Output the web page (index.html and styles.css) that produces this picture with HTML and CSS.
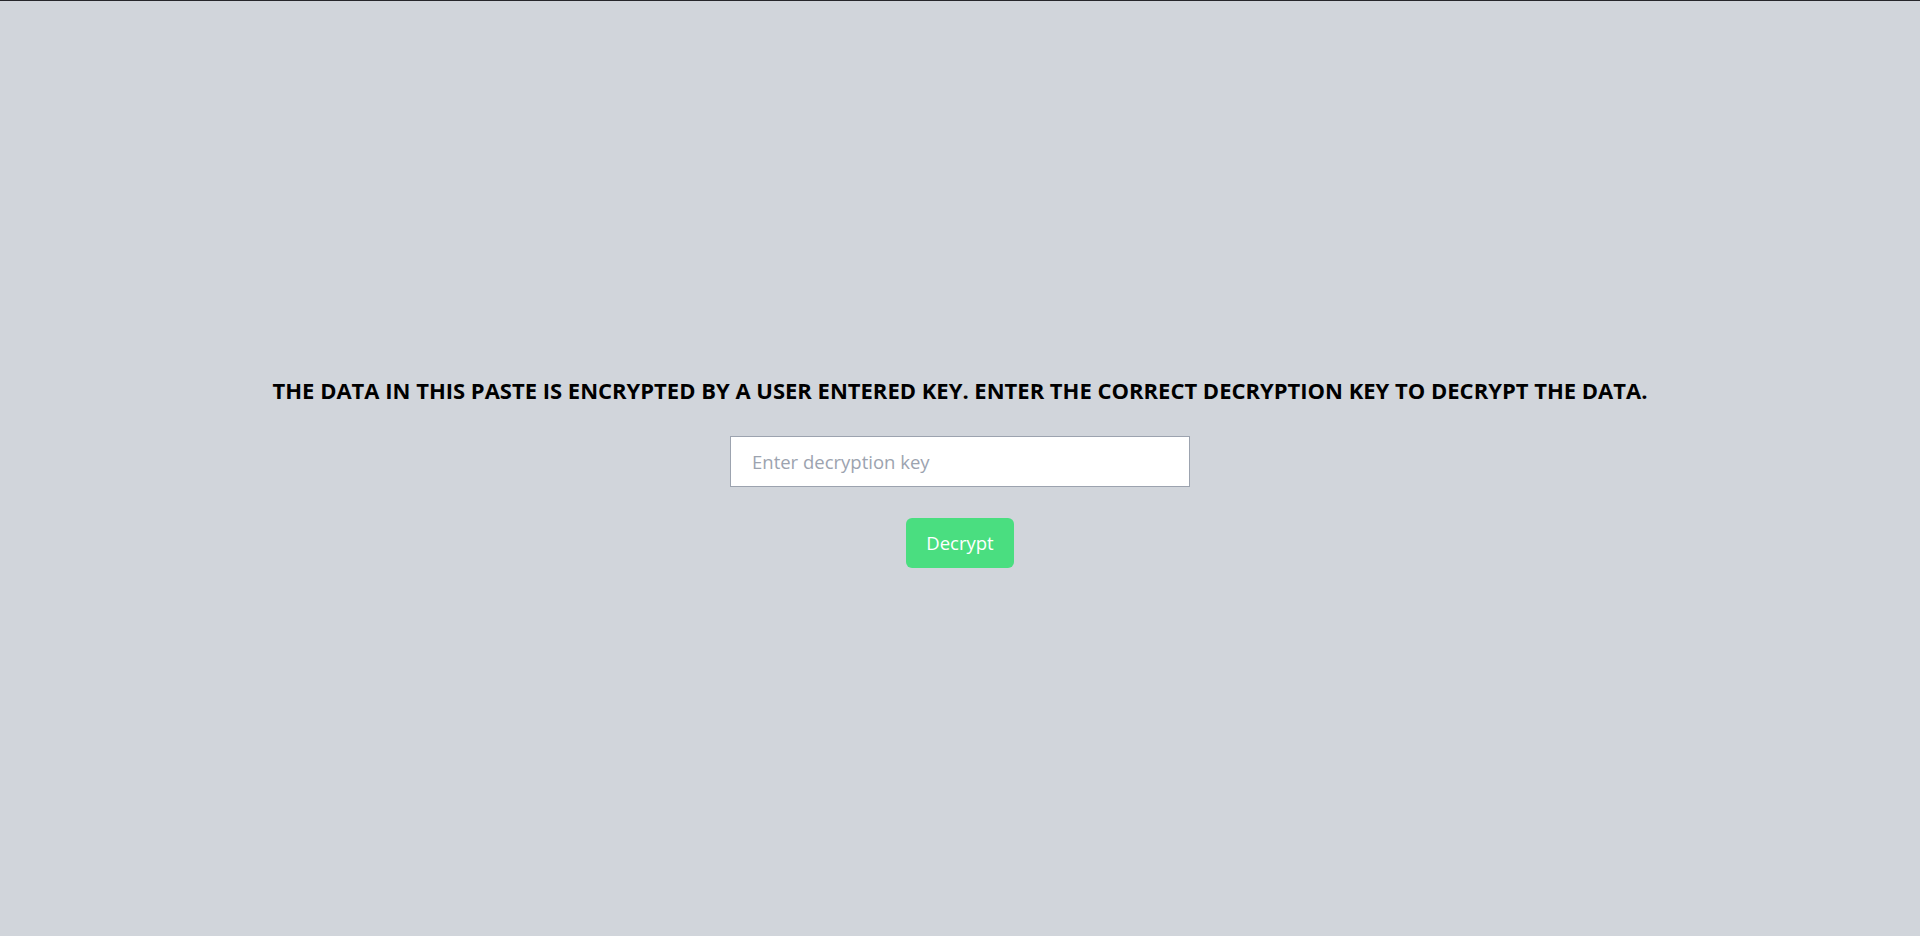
FILE: index.html
```html
<!DOCTYPE html>
<html lang="en">
<head>
<meta charset="utf-8">
<title>Encrypted paste</title>
<link rel="stylesheet" href="styles.css">
</head>
<body>
<div class="topline"></div>
<main class="page">
  <h1 class="notice">The data in this paste is encrypted by a user entered key. Enter the correct decryption key to decrypt the data.</h1>
  <input class="key-input" type="password" placeholder="Enter decryption key">
  <button class="decrypt-btn" type="button">Decrypt</button>
</main>
</body>
</html>
```

FILE: styles.css
```css
* { box-sizing: border-box; }
html, body {
  margin: 0;
  padding: 0;
  height: 100%;
}
body {
  background: #d1d5db;
  font-family: "Open Sans", "Noto Sans", "Liberation Sans", sans-serif;
  color: #000;
  overflow: hidden;
}
.topline {
  height: 1px;
  background: #26262b;
}
.page {
  height: 935px;
  display: flex;
  flex-direction: column;
  align-items: center;
  justify-content: center;
  padding-top: 6px;
}
.notice {
  margin: 0 0 32px 0;
  font-size: 22px;
  line-height: 28px;
  font-weight: 700;
  text-transform: uppercase;
  letter-spacing: 0;
  text-align: center;
}
.key-input {
  width: 460px;
  height: 51px;
  margin: 0 0 31px 0;
  padding: 0 21px;
  border: 1px solid #9ca3af;
  border-radius: 0;
  background: #fff;
  font-family: inherit;
  font-size: 18.5px;
  color: #111827;
  outline: none;
}
.key-input::placeholder {
  color: #9ca3af;
}
.decrypt-btn {
  width: 108px;
  height: 50px;
  border: none;
  border-radius: 6px;
  background: #4ade80;
  color: #fff;
  font-family: inherit;
  font-size: 18.5px;
  padding: 0;
  cursor: pointer;
}
```
